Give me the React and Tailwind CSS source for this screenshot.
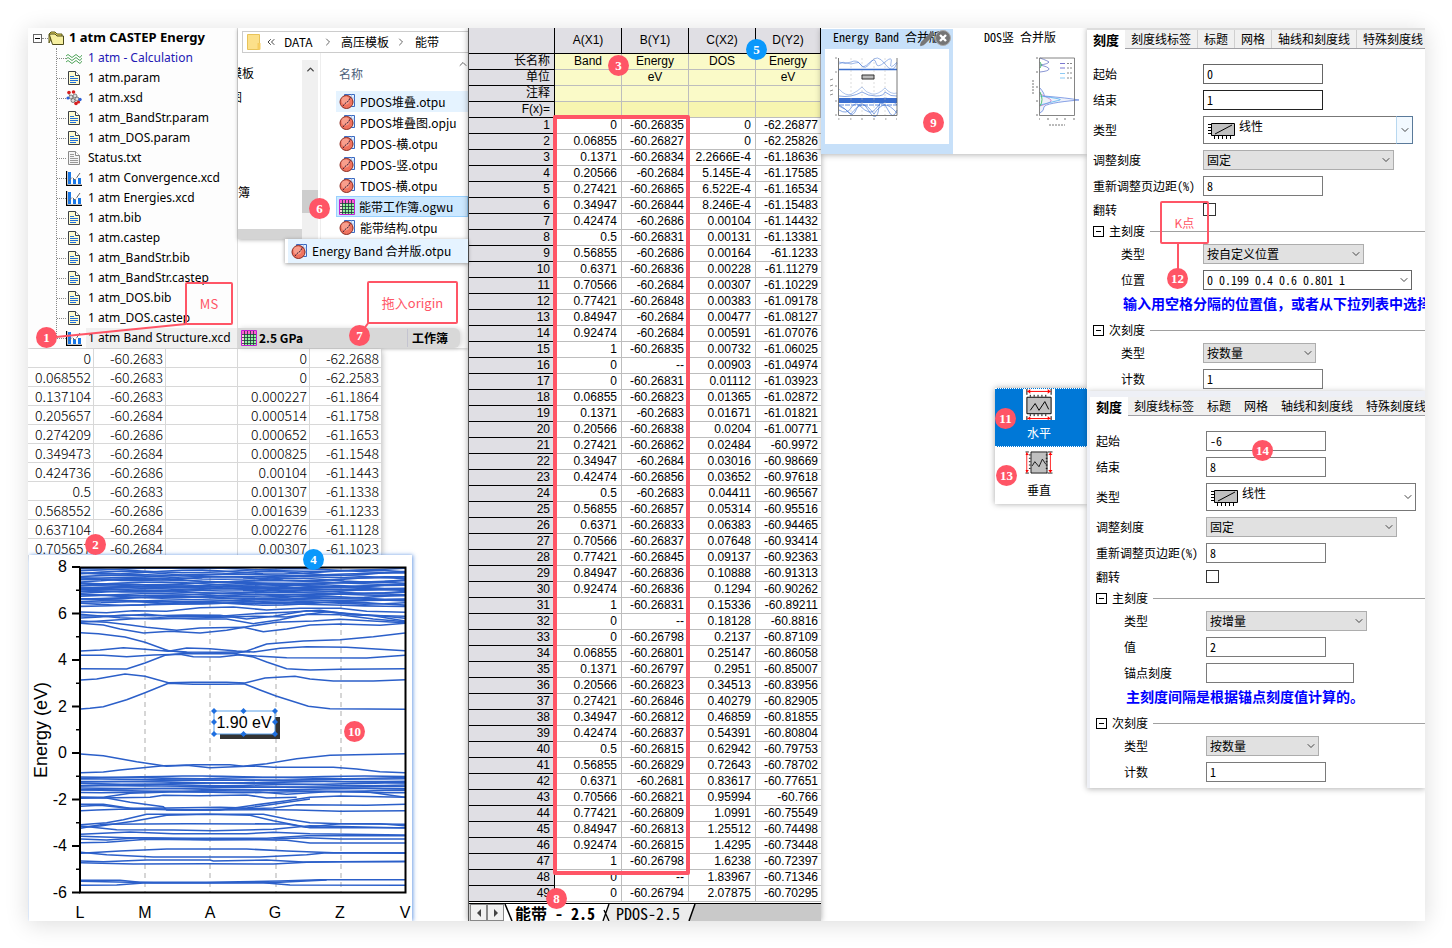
import { ChevronDown, ChevronUp, ChevronRight, ChevronsLeft, Pencil } from "lucide-react";

const TREE = [
  ["wave", "1 atm - Calculation"],
  ["doc", "1 atm.param"],
  ["atoms", "1 atm.xsd"],
  ["doc", "1 atm_BandStr.param"],
  ["doc", "1 atm_DOS.param"],
  ["text", "Status.txt"],
  ["chart", "1 atm Convergence.xcd"],
  ["chart", "1 atm Energies.xcd"],
  ["doc", "1 atm.bib"],
  ["doc", "1 atm.castep"],
  ["doc", "1 atm_BandStr.bib"],
  ["doc", "1 atm_BandStr.castep"],
  ["doc", "1 atm_DOS.bib"],
  ["doc", "1 atm_DOS.castep"],
  ["chart", "1 atm Band Structure.xcd"],
];

const FILES = [
  ["graph", "PDOS堆叠.otpu"],
  ["graph", "PDOS堆叠图.opju"],
  ["graph", "PDOS-横.otpu"],
  ["graph", "PDOS-竖.otpu"],
  ["graph", "TDOS-横.otpu"],
  ["book", "能带工作簿.ogwu"],
  ["graph", "能带结构.otpu"],
];

const RAW = [
  ["0", "-60.2683", "0", "-62.2688"],
  ["0.068552", "-60.2683", "0", "-62.2583"],
  ["0.137104", "-60.2683", "0.000227", "-61.1864"],
  ["0.205657", "-60.2684", "0.000514", "-61.1758"],
  ["0.274209", "-60.2686", "0.000652", "-61.1653"],
  ["0.349473", "-60.2684", "0.000825", "-61.1548"],
  ["0.424736", "-60.2686", "0.00104", "-61.1443"],
  ["0.5", "-60.2683", "0.001307", "-61.1338"],
  ["0.568552", "-60.2686", "0.001639", "-61.1233"],
  ["0.637104", "-60.2684", "0.002276", "-61.1128"],
  ["0.705657", "-60.2684", "0.00307", "-61.1023"],
];

const K = ["0", "0.06855", "0.1371", "0.20566", "0.27421", "0.34947", "0.42474", "0.5", "0.56855", "0.6371", "0.70566", "0.77421", "0.84947", "0.92474", "1", "0"];
const B = "-60.26835 -60.26827 -60.26834 -60.2684 -60.26865 -60.26844 -60.2686 -60.26831 -60.2686 -60.26836 -60.2684 -60.26848 -60.2684 -60.2684 -60.26835 -- -60.26831 -60.26823 -60.2683 -60.26838 -60.26862 -60.2684 -60.26856 -60.2683 -60.26857 -60.26833 -60.26837 -60.26845 -60.26836 -60.26836 -60.26831 -- -60.26798 -60.26801 -60.26797 -60.26823 -60.26846 -60.26812 -60.26837 -60.26815 -60.26829 -60.2681 -60.26821 -60.26809 -60.26813 -60.26815 -60.26798 -- -60.26794".split(" ");
const C = "0 0 2.2666E-4 5.145E-4 6.522E-4 8.246E-4 0.00104 0.00131 0.00164 0.00228 0.00307 0.00383 0.00477 0.00591 0.00732 0.00903 0.01112 0.01365 0.01671 0.0204 0.02484 0.03016 0.03652 0.04411 0.05314 0.06383 0.07648 0.09137 0.10888 0.1294 0.15336 0.18128 0.2137 0.25147 0.2951 0.34513 0.40279 0.46859 0.54391 0.62942 0.72643 0.83617 0.95994 1.0991 1.25512 1.4295 1.6238 1.83967 2.07875".split(" ");
const D = "-62.26877 -62.25826 -61.18636 -61.17585 -61.16534 -61.15483 -61.14432 -61.13381 -61.1233 -61.11279 -61.10229 -61.09178 -61.08127 -61.07076 -61.06025 -61.04974 -61.03923 -61.02872 -61.01821 -61.00771 -60.9972 -60.98669 -60.97618 -60.96567 -60.95516 -60.94465 -60.93414 -60.92363 -60.91313 -60.90262 -60.89211 -60.8816 -60.87109 -60.86058 -60.85007 -60.83956 -60.82905 -60.81855 -60.80804 -60.79753 -60.78702 -60.77651 -60.766 -60.75549 -60.74498 -60.73448 -60.72397 -60.71346 -60.70295".split(" ");

const BANDS = [
  "182,492 210,490 250,485 320,464 375,443 445,415 520,418 620,418 672,416 720,435 768,453 865,484 930,491 1155,493",
  "182,405 230,402 315,387 375,394 445,413 515,412 620,412 675,414 735,399 825,394 870,402 940,408 1060,408 1155,404",
  "182,371 320,372 375,354 435,331 480,326 640,326 700,336 740,351 800,371 870,375 960,373 1155,371",
  "182,263 235,266 315,276 375,292 445,317 520,325 650,325 680,318 740,297 850,288 960,284 1060,275 1155,264",
  "182,318 240,315 310,308 375,313 445,319 500,309 570,311 650,318 700,321 780,310 860,305 980,307 1155,317",
  "182,331 250,331 320,335 400,330 480,328 520,335 600,336 660,329 710,333 800,338 1040,339 1155,331",
  "430,316 500,321 600,322 690,320",
  "182,235 250,240 300,252 370,264 450,259 540,264 620,256 680,245 770,232 880,228 960,223 1155,233",
  "182,228 260,232 330,240 380,247 470,256 540,249 670,247 730,260 800,252 870,240 960,237 1080,241 1155,235",
  "182,232 240,228 330,222 420,218 520,222 620,222 700,236 780,224 860,208 960,209 1060,222 1155,230",
  "182,219 240,216 310,210 400,212 500,210 600,211 680,222 760,214 860,197 960,203 1060,212 1155,228",
  "182,213 300,213 380,208 460,215 600,214 700,206 800,202 900,196 980,206 1080,212 1155,220",
  "182,201 260,203 340,197 440,199 540,188 640,186 740,195 840,190 960,190 1040,199 1155,202",
  "182,208 300,218 400,222 560,218 700,214 800,216 920,200 1000,210 1155,214",
  "182,627 250,632 350,650 440,664 520,659 630,659 670,664 740,656 830,641 930,631 1155,626",
  "182,683 250,681 300,675 430,662 500,661 570,668 700,663 760,667 940,667 1010,672 1080,680 1155,683",
  "182,757 250,757 330,745 450,741 600,741 720,741 800,748 920,740 1040,740 1155,757",
  "182,757 260,759 330,772 430,785 440,795 600,795 690,782 800,767 870,757 960,753 1155,757",
  "182,760 390,757 430,751 540,752 680,750 740,759 830,757",
  "182,778 250,778 330,790 440,789 600,787 680,789 760,778 870,762",
  "182,784 240,781 340,791 500,795 760,789 830,779 1040,781 1155,778",
  "182,797 230,795 320,792 560,795 760,794 830,795 960,799 1155,797",
  "182,839 260,833 310,824 380,808 460,808 730,808 800,822 870,833 960,836 1155,838",
  "182,845 240,843 340,829 440,811 560,808 690,811 760,827 860,847 960,836 1080,836 1155,842",
  "182,850 250,838 500,836 800,837 870,848 1155,848",
  "182,843 290,854 460,855 580,857 760,853 870,842 1155,849",
  "182,868 330,861 460,866 680,866 760,862 870,866 1155,870",
  "182,874 320,878 520,880 740,880 860,872 1155,872",
  "182,882 260,885 360,878 560,884 760,882 860,878 960,882 1155,882",
  "182,893 260,892 380,883 520,884 720,884 800,886 870,894 1155,894",
  "182,925 300,918 440,912 680,912 800,918 940,923 1155,923",
  "182,922 260,929 400,936 720,936 860,929 920,923 1155,925",
  "182,948 250,950 380,945 570,945 580,948 740,945 850,951 1155,949",
  "182,953 340,957 560,956 760,957 860,952 960,950 1155,950",
  "182,1006 300,1006 360,1012 560,1012 780,1008 900,1004 1155,1004",
  "182,1021 290,1020 380,1013 560,1014 730,1013 810,1020 1155,1021",
  "182,1009 400,1013 750,1013 920,1005",
];

function wiggle(y, amp, seed) {
  let s = "";
  for (let i = 0; i <= 16; i++) {
    const x = 182 + (i * 973) / 16;
    const v = y + amp * Math.sin(seed * 2.3 + i * (0.35 + (seed % 5) * 0.13));
    s += `${x.toFixed(0)},${Math.max(70, v).toFixed(1)} `;
  }
  return s;
}
const UPPER = [
  ...Array.from({ length: 15 }, (_, i) => wiggle(73 + i * 4, 6, i + 1)),
  ...Array.from({ length: 17 }, (_, i) => wiggle(122 + i * 3.6, 5, i + 4)),
];
const LOWER = Array.from({ length: 12 }, (_, i) => wiggle(695 + i * 4.2, 2, i + 3));

function Icon({ kind }) {
  if (kind === "doc" || kind === "text") {
    const gray = kind === "text";
    return (
      <svg viewBox="0 0 16 16" className="size-4 shrink-0">
        <path d="M2.500 1.500h7l4 4v9h-11z" fill={gray ? "#f4f4f4" : "#fffbd0"} stroke={gray ? "#8a8a8a" : "#3b4046"} />
        <path d="M9.500 1.500v4h4" fill="#fff" stroke={gray ? "#8a8a8a" : "#3b4046"} />
        <path d={gray ? "M4 4.500h4M4 6.500h4M4 8.500h8M4 10.500h8M4 12.500h8" : "M4 6.500h4M4 8.500h8M4 10.500h8M4 12.500h6"} stroke={gray ? "#999" : "#1f6fd8"} />
      </svg>
    );
  }
  if (kind === "wave")
    return (
      <svg viewBox="0 0 16 16" className="size-4 shrink-0" fill="none" stroke="#4fa45a">
        <path d="M0 6q2-3 4 0t4 0 4 0 4-1M0 9q2-3 4 0t4 0 4 0 4-1M0 12q2-3 4 0t4 0 4 0 4-1" />
      </svg>
    );
  if (kind === "atoms")
    return (
      <svg viewBox="0 0 16 16" className="size-4 shrink-0">
        <path d="M2 3l3 4 4-1 4 3M5 7l2 4 4 2" stroke="#777" fill="none" />
        <g fill="#ddd" stroke="#555" strokeWidth=".7"><circle cx="5" cy="7" r="2" /><circle cx="9" cy="6" r="2" /><circle cx="7" cy="10.500" r="2" /><circle cx="11" cy="9" r="2" /></g>
        <g fill="#d81e1e"><circle cx="3" cy="2.500" r="1.800" /><circle cx="7.500" cy="2" r="1.800" /><circle cx="10" cy="13.500" r="1.800" /><circle cx="12.500" cy="12" r="1.600" /></g>
        <g fill="#2b5fd8"><circle cx="2" cy="8" r="1.600" /><circle cx="14" cy="9.500" r="1.700" /></g>
      </svg>
    );
  if (kind === "chart")
    return (
      <svg viewBox="0 0 16 16" className="size-4 shrink-0">
        <path d="M2 2h3v12H2zM7 9h3v5H7zM12 8h3v6h-3z" fill="#1878e8" />
        <path d="M3 11l3-4 3 3 5-7" fill="none" stroke="#666" />
        <path d="M5 7l2 1M9 9l2-1" stroke="#fff" />
        <path d="M.5 1v14.500H16" fill="none" stroke="#000" strokeWidth="1.400" />
      </svg>
    );
  if (kind === "graph")
    return (
      <svg viewBox="0 0 17 17" className="size-[17px] shrink-0">
        <path d="M5.500 1.500h10v12h-10z" fill="#e3efff" stroke="#3a68c0" />
        <path d="M9 1.500v12M12.500 1.500v12M5.500 5h10M5.500 9h10" stroke="#8fb4ea" strokeWidth=".7" />
        <circle cx="7.500" cy="9" r="6.500" fill="#f0735f" stroke="#8b2b20" />
        <circle cx="6.500" cy="7.500" r="4" fill="#fbb0a0" opacity=".7" />
        <path d="M4 13l2-2.500L9.500 8l2-4" fill="none" stroke="#3a2038" strokeDasharray="2 .8" />
      </svg>
    );
  return (
    <svg viewBox="0 0 16 16" className="size-4 shrink-0">
      <path d="M.5.5h15v15H.5z" fill="#fff" stroke="#c020d0" />
      <path d="M1 1h14v3H1z" fill="#ff5fd0" />
      <path d="M1 4h2v11H1z" fill="#ffd0e0" />
      <path d="M3 4h12v11H3z" fill="#8ff59c" />
      <path d="M3.500 1v14M6.500 1v14M9.500 1v14M12.500 1v14M1 4.500h14M1 7.500h14M1 10.500h14M1 13.500h14" stroke="#20323a" strokeWidth=".8" />
    </svg>
  );
}

function Badge({ n, blue, className }) {
  return (
    <span className={`absolute z-30 flex size-[21px] items-center justify-center rounded-full font-['Liberation_Serif',serif] text-[13px] leading-none font-bold text-white ${blue ? "bg-[#0a98fb]" : "bg-[#ff5566]"} ${className}`}>
      {n}
    </span>
  );
}

function Callout({ children, className }) {
  return (
    <div className={`absolute z-20 flex items-center justify-center rounded-xs border-2 border-[#ff5566] text-[#ff5566] ${className}`}>
      {children}
    </div>
  );
}

function ProjectTree() {
  return (
    <section className="w-[210px] shrink-0 border-r border-[#ddd] bg-[#fdfdfd] font-['Noto_Sans',sans-serif] text-[12px] text-black">
      <div className="flex h-5 items-center pl-[5px]">
        <button aria-label="收起" className="flex size-[9px] items-center justify-center border border-[#666]"><span className="h-px w-[5px] bg-black" /></button>
        <span className="w-[6px] border-t border-dotted border-[#888]" />
        <svg viewBox="0 0 16 15" className="h-[15px] w-4 shrink-0">
          <path d="M1 3l2-2h4l2 2h5v3H4L1 12z" fill="#e8d860" stroke="#5c5a1a" />
          <path d="M1.500 4l3 9.500h11V5H9L7 3H2z" fill="#f6efa0" stroke="#4c4a1a" />
        </svg>
        <h2 className="ml-[5px] text-[13px] font-bold whitespace-nowrap">1 atm CASTEP Energy</h2>
      </div>
      <ul className="relative">
        <li className="absolute top-0 left-7 h-[290px] border-l border-dotted border-[#888]" aria-hidden="true" />
        {TREE.map(([kind, name], i) => (
          <li key={name} className="flex h-5 items-center pl-[29px]">
            <span className="w-[9px] border-t border-dotted border-[#888]" />
            <Icon kind={kind} />
            <span className={`ml-[4px] flex h-5 grow items-center pl-[2px] whitespace-nowrap ${i === 0 ? "text-[#2318b4]" : ""} ${i === 14 ? "bg-[#f0f0f0]" : ""}`}>{name}</span>
          </li>
        ))}
      </ul>
    </section>
  );
}

function Explorer() {
  return (
    <section className="relative flex h-[211px] flex-col overflow-hidden bg-white pt-[3px] text-[12px] text-black shadow-[0_1px_4px_rgba(0,0,0,0.3)]">
      <nav className="ml-1 flex h-[22px] shrink-0 items-center border border-r-0 border-[#ccc] pl-1">
        <svg viewBox="0 0 14 16" className="h-4 w-[14px]"><path d="M.5.500h12v15H.5z" fill="#fce08a" stroke="#e8c35a" /><path d="M10.500 9h3v6.500h-3z" fill="#f6cd60" /></svg>
        <ChevronsLeft className="ml-1 size-3 text-[#444]" strokeWidth={2} />
        <a href="#data" className="ml-[7px] w-[38px]">DATA</a>
        <ChevronRight className="mr-1 size-3 text-[#666]" />
        <a href="#template" className="ml-[3px] w-[52px]">高压模板</a>
        <ChevronRight className="mx-[2px] size-3 text-[#666]" />
        <a href="#band" className="ml-[6px]">能带</a>
      </nav>
      <div className="flex grow">
        <div className="flex w-16 flex-col overflow-hidden">
          <div className="-ml-2 mt-[8px] h-6 leading-6">模板</div>
          <div className="-ml-2 h-6 leading-6">图</div>
          <div className="mt-[71px] h-6 leading-6">簿</div>
          <div className="mt-auto h-[10px] bg-[#d4d4d4]" />
        </div>
        <div className="mt-[7px] flex w-4 flex-col items-center bg-[#f0f0f0]">
          <ChevronUp className="mt-1 size-[11px] text-[#444]" strokeWidth={3} />
          <span className="mt-auto mb-[26px] h-[23px] w-full bg-[#cdcdcd]" />
        </div>
        <div className="ml-[2px] flex grow flex-col border-l border-[#eee]">
          <div className="flex h-[38px] shrink-0 items-center pt-1 pl-[18px] text-[#4c607a]">
            名称<ChevronUp className="-mt-5 mr-[-1px] ml-auto size-3 text-[#666]" />
          </div>
          <ul className="pl-[15px]">
            {FILES.map(([kind, name], i) => (
              <li key={name} className={`flex h-[21px] items-center gap-1 pl-[3px] whitespace-nowrap ${i === 0 ? "bg-[#e5f3ff]" : ""} ${i === 5 ? "bg-[#cce8ff] ring-1 ring-[#99d1ff] ring-inset" : ""}`}>
                <Icon kind={kind} />{name}
              </li>
            ))}
          </ul>
        </div>
      </div>
    </section>
  );
}

function RawTable() {
  return (
    <div className="mt-px h-[206px] w-[354px] overflow-hidden bg-white shadow-[0_2px_6px_rgba(0,0,0,0.3)]">
      <table className="w-full table-fixed border-separate border-spacing-0 text-right text-[14px] leading-[18px] font-light text-black">
        <colgroup><col className="w-[66px]" /><col /><col /><col /><col /></colgroup>
        <tbody>
          {RAW.map((r) => (
            <tr key={r[0]}>
              {[r[0], r[1], "", r[2], r[3]].map((v, i) => (
                <td key={i} className="h-[19px] border-r border-b border-[#d8d8d8] p-0 pr-[2px]">{v}</td>
              ))}
            </tr>
          ))}
        </tbody>
      </table>
    </div>
  );
}

function BandChart() {
  const ty = (v) => 567 + (8 - v) * 23.25;
  return (
    <section className="relative z-10 ml-px h-[366px] w-[383px] bg-white shadow-[1px_0_4px_rgba(70,130,220,0.8)]">
      <svg viewBox="29 555 383 366" className="h-full w-full font-['Liberation_Sans',sans-serif]" role="img" aria-label="能带图">
        <g stroke="#c9c9c9" strokeWidth="1.500" strokeDasharray="5 4">
          {[145, 210, 276, 341].map((x) => <path key={x} d={`M${x} 567V892`} />)}
        </g>
        <g transform="translate(20 545) scale(.33333)" fill="none" stroke="#2b5fc9" strokeWidth="4.600">
          {UPPER.map((p, i) => <polyline key={`u${i}`} points={p} />)}
          {LOWER.map((p, i) => <polyline key={`l${i}`} points={p} />)}
          {BANDS.map((p, i) => <polyline key={i} points={p} />)}
        </g>
        <path d="M80 567.500H405.500V892.500H80z" fill="none" stroke="#000" strokeWidth="2" />
        <g stroke="#000" strokeWidth="2">
          {[8, 6, 4, 2, 0, -2, -4, -6].map((v) => <path key={v} d={`M72 ${ty(v)}H80`} />)}
          {[7, 5, 3, 1, -1, -3, -5].map((v) => <path key={v} d={`M76 ${ty(v)}H80`} strokeWidth="1.500" />)}
        </g>
        <g fontSize="16" textAnchor="end">
          {[8, 6, 4, 2, 0, -2, -4, -6].map((v) => <text key={v} x="67" y={ty(v) + 5}>{v}</text>)}
        </g>
        <g fontSize="16" textAnchor="middle">
          {["L", "M", "A", "G", "Z", "V"].map((t, i) => <text key={t} x={80 + i * 65} y="918">{t}</text>)}
          <text transform="translate(47 730) rotate(-90)" fontSize="18">Energy (eV)</text>
        </g>
        <path d="M220 717h60v22h-60z" fill="#333" />
        <path d="M214 711h61v23h-61z" fill="#fff" stroke="#5aa0e8" />
        <text x="244" y="728" fontSize="16" textAnchor="middle">1.90 eV</text>
        <g fill="#1e6fe0">
          {[[214, 711], [243.5, 711], [275, 711], [214, 722], [275, 722], [214, 734], [243.5, 734], [275, 734]].map(([x, y]) => (
            <path key={`${x}-${y}`} d={`M${x - 3} ${y}l3-3 3 3-3 3z`} />
          ))}
        </g>
      </svg>
      <Badge n="4" blue className="top-[-6px] left-[274px]" />
      <Badge n="10" className="top-[166px] left-[315px]" />
    </section>
  );
}

function Sheet() {
  const meta = [
    ["长名称", "Band", "Energy", "DOS", "Energy"],
    ["单位", "", "eV", "", "eV"],
    ["注释", "", "", "", ""],
    ["F(x)=", "", "", "", ""],
  ];
  const head = "border-r border-b border-black bg-[#e0dfe4] p-0 font-normal";
  return (
    <section className="relative flex w-[353px] shrink-0 flex-col border-l border-[#555] bg-white font-['Liberation_Sans','Noto_Sans_CJK_SC',sans-serif] text-[12px] text-black shadow-[0_0_6px_rgba(0,0,0,0.35)]">
      <table className="w-full table-fixed border-separate border-spacing-0 leading-[15px]">
        <colgroup><col className="w-[86px]" /><col className="w-[67px]" /><col className="w-[67px]" /><col className="w-[67px]" /><col /></colgroup>
        <thead>
          <tr>
            {["", "A(X1)", "B(Y1)", "C(X2)", "D(Y2)"].map((t) => <th key={t} className={`h-[26px] ${head}`}>{t}</th>)}
          </tr>
        </thead>
        <tbody>
          {meta.map((r, n) => (
            <tr key={r[0]}>
              <th className={`h-4 text-right text-[12px] ${head}`}><div className="h-[15px] pr-1">{r[0]}</div></th>
              {r.slice(1).map((v, i) => (
                <td key={i} className={`h-4 border-r border-b border-[#bdbdbd] p-0 text-center ${n === 3 ? "bg-[#f7f5b0]" : "bg-[#fafac8]"}`}>{v}</td>
              ))}
            </tr>
          ))}
          {B.map((b, i) => (
            <tr key={i}>
              <th className={`h-4 text-right ${head}`}><div className="pr-1">{i + 1}</div></th>
              <td className="border-r border-b border-[#bdbdbd] p-0 pr-1 text-right">{K[i % 16]}</td>
              <td className="border-r border-b border-[#bdbdbd] p-0 pr-1 text-right">{b}</td>
              <td className="border-r border-b border-[#bdbdbd] p-0 pr-1 text-right">{C[i]}</td>
              <td className="border-b border-[#bdbdbd] p-0 pr-[3px] text-right">{D[i]}</td>
            </tr>
          ))}
        </tbody>
      </table>
      <div className="mt-auto flex h-[18px] items-stretch border-t border-black bg-[#c9c9c9] pl-px font-['Noto_Sans_Mono_CJK_SC','Noto_Sans_CJK_SC',monospace] text-[16px] leading-4">
        <button aria-label="上一个" className="flex w-[17px] items-center justify-center border border-[#888] bg-[#f0f0f0]"><svg viewBox="0 0 6 8" className="h-2 w-[6px]"><path d="M5 0v8L1 4z" fill="#444" /></svg></button>
        <button aria-label="下一个" className="flex w-[17px] items-center justify-center border border-[#888] bg-[#f0f0f0]"><svg viewBox="0 0 6 8" className="h-2 w-[6px]"><path d="M1 0v8l4-4z" fill="#444" /></svg></button>
        <button className="flex items-center bg-white pr-1 font-bold whitespace-nowrap">
          <svg viewBox="0 0 11 17" className="h-[17px] w-[11px]"><path d="M1 0l7 17" stroke="#000" strokeWidth="1.500" /></svg>能带 - 2.5
        </button>
        <button className="flex items-center bg-[#ececec] whitespace-nowrap">
          <svg viewBox="0 0 17 17" className="h-[17px] w-[17px]"><path d="M0 0h9L3 17H0z" fill="#fff" /><path d="M10 0L4 17M5 6l5 11" stroke="#000" strokeWidth="1.300" fill="none" /></svg>PDOS-2.5
        </button>
        <svg viewBox="0 0 16 17" className="h-[17px] w-4"><path d="M0 0h15L9 17H0z" fill="#ececec" /><path d="M15 0L9 17" stroke="#000" strokeWidth="1.500" /></svg>
      </div>
      <div className="absolute top-[87px] left-[84px] z-10 h-[760px] w-[137px] rounded-xs border-4 border-[#ff5566]" />
      <Badge n="3" className="top-[27px] left-[139px]" />
      <Badge n="5" blue className="top-[11px] left-[277px]" />
      <Badge n="8" className="top-[860px] left-[77px]" />
    </section>
  );
}

function Gallery() {
  return (
    <section className="relative flex h-[126px] bg-white pt-px font-['Noto_Sans_Mono_CJK_SC','Noto_Sans_CJK_SC',monospace] text-[12px] leading-4 whitespace-nowrap text-black shadow-[0_1px_6px_rgba(0,0,0,0.3)]">
      <figure className="w-[132px] bg-[#c7e0f9] px-1">
        <figcaption className="h-5 pl-2">Energy Band 合并版</figcaption>
        <svg viewBox="825 49 124 95" className="h-[95px] w-full bg-white" fill="none" stroke="#3b6fd0">
          <path d="M839 64q4-3 8-1t8 0 6 2 8-2 7 0 9-1 6 1 6-1M839 62q6 3 12 0t10 3 10-3 14 2 12-1" strokeWidth=".5" />
          <path d="M839 69.500h58" strokeWidth="1.400" />
          <path d="M839 89q7 8 13 5t10-7q4 6 10 7t13-6q6 7 12 5" strokeWidth=".4" />
          <path d="M839 96q12 2 23-4 6 4 14 4t9-4q6 5 12 4M839 106q7 3 12 8 6-8 11-9t12 9q6-9 11-9t12 8M839 110q8 5 12-2t9-2 9 6 9-6 10 4 9 0M839 105q6 3 10 8t8-5 12 3 10-4 18-2" strokeWidth=".6" />
          <path d="M839 100.500h58" strokeWidth="5" />
          <path d="M839 105h58" strokeWidth=".8" strokeDasharray="5 1" />
          <path d="M851 58v57M862 58v57M874 58v57M885 58v57" stroke="#bbb" strokeWidth=".5" strokeDasharray="2 2" />
          <path d="M838.500 58v57.500h58.500V58" stroke="#555" strokeWidth=".8" />
          <path d="M862 75h12v4h-12z" fill="#bbb" stroke="#333" />
          <path d="M830 95l3-1M830 91l3-1M830 86l3-1M830 80l3-1M835 58h2M835 72h2M835 86h2M835 101h2M835 115h2M838 119h1.500M850 119h1.500M861 119h2M873 119h2M885 119h1.500M896 119h1" stroke="#777" strokeWidth=".8" />
        </svg>
      </figure>
      <figure className="grow bg-white">
        <figcaption className="h-5 pl-[31px]">DOS竖 合并版</figcaption>
        <svg viewBox="953 49 134 95" className="h-[95px] w-full" fill="none">
          <path d="M1040 58q8 3 9 4-1 2-9 3 9 2 9 4t-9 3" stroke="#6a78c8" strokeWidth=".8" />
          <path d="M1040 88q5 6 4 8 24 2 35 4-34 3-35 7 0 4-4 6" stroke="#6a8ae0" fill="#eef1fa" strokeWidth=".8" />
          <path d="M1040 94q9 4 11 6t-11 6" stroke="#c06ac0" strokeWidth=".7" />
          <path d="M1040 96q24 3 20 4t-20 5" stroke="#3fa9f0" strokeWidth=".7" />
          <path d="M1040 92q4 8 0 14M1040 62q3 3 0 6" stroke="#50c070" />
          <path d="M1039.500 58H1074.500V115.500H1039.500z" stroke="#666" strokeWidth=".8" />
          <path d="M1036 58h2M1036 72h2M1036 87h2M1036 101h2M1036 115h2M1039 119h1M1047 119h2M1056 119h2M1064 119h2M1073 119h2M1049 125h16M1033 80v14" stroke="#777" strokeDasharray="2 1" />
          <path d="M1060 63.500h5M1060 68h5" stroke="#7a78d0" /><path d="M1060 73.500h5M1060 78h5" stroke="#8ccaf5" />
          <path d="M1067 63.500h6M1067 68h5M1067 73h6M1067 78h5" stroke="#888" strokeDasharray="2 1" />
        </svg>
      </figure>
      <button aria-label="编辑" className="absolute top-[3px] left-[98px] text-[#666]"><Pencil className="size-4" fill="#777" strokeWidth={1} /></button>
      <button aria-label="关闭" className="absolute top-[2px] left-[114px]">
        <svg viewBox="0 0 16 16" className="size-4"><circle cx="8" cy="8" r="7.500" fill="#757575" stroke="#aaa" /><path d="M5 5l6 6M11 5l-6 6" stroke="#fff" strokeWidth="2.400" /></svg>
      </button>
      <Badge n="9" className="top-[84px] left-[102px]" />
    </section>
  );
}

function AxisIcon({ vertical }) {
  return (
    <svg viewBox="0 0 32 32" className="mr-1 size-8 bg-white" fill="none">
      <g transform={vertical ? "rotate(90 16 16)" : undefined}>
        <path d={vertical ? "M3.500 6.500h25v19h-25z" : "M3.500 8.500h25v17h-25z"} fill="#c0c0c0" stroke="#000" />
        <path d="M7 8V6M11 8V6M15 8V6M19 8V6M23 8V6M7 26v2M11 26v2M15 26v2M19 26v2M23 26v2" stroke="#000" />
        <path d="M3.500 0v6M28.500 0v6M3.500 28v4M28.500 28v4" stroke="#000" />
        <path d="M4 2.500h24M4 30.500h24" stroke="#f00" />
        <path d="M4 2.500l3-2.500v5zM28 2.500l-3-2.500v5zM4 30.500l3-2.500v4zM28 30.500l-3-2.500v4z" fill="#f00" />
      </g>
      <path d={vertical ? "M8 20l3-5 5 6 4-9 4 6" : "M7 22l5-7 4 7 6-9 4 8"} stroke="#000" />
    </svg>
  );
}

function AxisPicker() {
  return (
    <section className="relative ml-auto w-[92px] bg-white font-['Noto_Sans_CJK_SC',sans-serif] text-[12px] shadow-[0_0_6px_rgba(0,0,0,0.35)]">
      <button className="flex h-[59px] w-full flex-col items-center border-y border-dotted border-white bg-[#0078d7] leading-[26px] text-white"><AxisIcon /><span className="mr-1">水平</span></button>
      <button className="flex h-[57px] w-full flex-col items-center pt-[2px] leading-[28px] text-black"><AxisIcon vertical /><span className="mr-1">垂直</span></button>
      <Badge n="11" className="top-[20px] left-0" />
      <Badge n="13" className="top-[77px] left-[1px]" />
    </section>
  );
}

function Row({ id, label, indent, tall, children }) {
  return (
    <div className={`flex items-center ${tall ? "h-[34px]" : "h-[26px]"}`}>
      <label htmlFor={id} className={`w-[110px] shrink-0 whitespace-nowrap ${indent ? "pl-7" : ""}`}>{label}</label>
      {children}
    </div>
  );
}

function Text({ id, value, className }) {
  return <input id={id} type="text" defaultValue={value} className={`h-5 border bg-white px-[3px] pb-px outline-none ${className}`} />;
}

function Select({ id, value, className }) {
  return (
    <span className={`relative h-5 ${className}`}>
      <select id={id} className="block h-full w-full appearance-none border border-[#adadad] bg-[#e1e1e1] px-[3px] leading-[18px]"><option>{value}</option></select>
      <ChevronDown className="pointer-events-none absolute top-1 right-[2px] size-3 text-[#444]" />
    </span>
  );
}

function TypeSelect({ id, active }) {
  return (
    <span className="relative h-7 w-[210px]">
      <select id={id} className="block h-full w-full appearance-none border border-[#777] bg-white pb-[9px] pl-[35px] leading-[16px]"><option>线性</option></select>
      <svg viewBox="0 0 28 17" className="pointer-events-none absolute top-[6px] left-[4px] h-[17px] w-7">
        <path d="M4.500 1.500h23v12h-23z" fill="#c0c0c0" stroke="#000" />
        <path d="M1 2.500h3M1 5.500h3M1 8.500h3M1 11.500h3M7.500 14v3M11.500 14v3M15.500 14v3M19.500 14v3M23.500 14v3" stroke="#000" />
        <path d="M8 12L25 3" stroke="#000" />
      </svg>
      <span className={`pointer-events-none absolute inset-y-0 right-0 flex w-[17px] items-center justify-center ${active ? "border border-[#5a7a9a] border-l-[#b8d8f0] bg-[#f2f9ff]" : ""}`}><ChevronDown className="size-3 text-[#444]" /></span>
    </span>
  );
}

function GroupTitle({ children }) {
  return (
    <div className="flex h-[21px] items-center gap-[5px] pt-px">
      <button aria-label={`收起${children}`} className="flex size-[11px] items-center justify-center border border-black"><span className="h-px w-[5px] bg-black" /></button>
      <h3>{children}</h3>
      <span className="h-px grow bg-[#a0a0a0]" />
    </div>
  );
}

function TabBar({ divided }) {
  const line = divided ? "border-[#d0d0d0]" : "border-transparent";
  return (
    <div role="tablist" className="flex h-[19px] overflow-hidden bg-[#f0f0f0] whitespace-nowrap">
      <button role="tab" aria-selected="true" className="w-[38px] shrink-0 bg-white text-center text-[13px] font-bold">刻度</button>
      <div className="flex grow border-b border-[#a0a0a5]">
        {["刻度线标签", "标题", "网格", "轴线和刻度线", "特殊刻度线"].map((t) => (
          <button role="tab" aria-selected="false" key={t} className={`shrink-0 border-r px-[6px] leading-4 ${line}`}>{t}</button>
        ))}
      </div>
    </div>
  );
}

const FORM = "font-['Noto_Sans_Mono_CJK_SC','Noto_Sans_CJK_SC',monospace] text-[12px] text-black bg-white";

function ScaleX() {
  return (
    <section className={`relative h-[363px] border-t-2 border-[#ddd] shadow-[0_0_6px_rgba(0,0,0,0.3)] ${FORM}`}>
      <TabBar divided />
      <form className="pt-3 pl-[6px]">
        <Row id="x-from" label="起始"><Text id="x-from" value="0" className="w-30 border-[#666]" /></Row>
        <Row id="x-to" label="结束"><Text id="x-to" value="1" className="w-30 border-[#222]" /></Row>
        <Row id="x-type" label="类型" tall><TypeSelect id="x-type" active /></Row>
        <Row id="x-rescale" label="调整刻度"><Select id="x-rescale" value="固定" className="w-[191px]" /></Row>
        <Row id="x-margin" label="重新调整页边距(%)"><Text id="x-margin" value="8" className="w-30 border-[#7a7a7a]" /></Row>
        <div className="flex h-[21px] items-center"><label htmlFor="x-rev" className="w-[110px]">翻转</label><input id="x-rev" type="checkbox" className="size-[13px] appearance-none border border-[#333] bg-white" /></div>
        <GroupTitle>主刻度</GroupTitle>
        <Row id="x-major" label="类型" indent><Select id="x-major" value="按自定义位置" className="w-[161px]" /></Row>
        <Row id="x-pos" label="位置" indent>
          <span className="relative flex h-5 w-[209px]">
            <Text id="x-pos" value="0 0.199 0.4 0.6 0.801 1" className="w-full border-[#666]" />
            <button type="button" aria-label="展开位置列表" className="absolute top-1 right-[2px]"><ChevronDown className="size-3 text-[#444]" /></button>
          </span>
        </Row>
        <p className="mb-[6px] h-5 overflow-hidden pl-[30px] text-[14px] leading-5 font-bold whitespace-nowrap text-[#0000ff]">输入用空格分隔的位置值，或者从下拉列表中选择</p>
        <GroupTitle>次刻度</GroupTitle>
        <Row id="x-minor" label="类型" indent><Select id="x-minor" value="按数量" className="w-[113px]" /></Row>
        <Row id="x-count" label="计数" indent><Text id="x-count" value="1" className="w-30 border-[#7a7a7a]" /></Row>
      </form>
      <Callout className="top-[171px] left-[73px] h-[43px] w-[49px] font-['Noto_Sans_CJK_SC',sans-serif] text-[12px]">K点</Callout>
      <span className="absolute top-[214px] left-[90px] z-20 h-7 w-[2px] bg-[#ff5566]" />
      <Badge n="12" className="top-[238px] left-[80px]" />
    </section>
  );
}

function ScaleY() {
  return (
    <section className={`relative h-[397px] border-t-[6px] border-l-[3px] border-[#eef0f6] shadow-[0_1px_6px_rgba(0,0,0,0.3)] ${FORM}`}>
      <TabBar />
      <form className="pt-3 pl-[6px]">
        <Row id="y-from" label="起始"><Text id="y-from" value="-6" className="w-30 border-[#7a7a7a]" /></Row>
        <Row id="y-to" label="结束"><Text id="y-to" value="8" className="w-30 border-[#7a7a7a]" /></Row>
        <Row id="y-type" label="类型" tall><TypeSelect id="y-type" /></Row>
        <Row id="y-rescale" label="调整刻度"><Select id="y-rescale" value="固定" className="w-[191px]" /></Row>
        <Row id="y-margin" label="重新调整页边距(%)"><Text id="y-margin" value="8" className="w-30 border-[#7a7a7a]" /></Row>
        <div className="flex h-[21px] items-center"><label htmlFor="y-rev" className="w-[110px]">翻转</label><input id="y-rev" type="checkbox" className="size-[13px] appearance-none border border-[#333] bg-white" /></div>
        <GroupTitle>主刻度</GroupTitle>
        <Row id="y-major" label="类型" indent><Select id="y-major" value="按增量" className="w-[161px]" /></Row>
        <Row id="y-step" label="值" indent><Text id="y-step" value="2" className="w-30 border-[#7a7a7a]" /></Row>
        <Row id="y-anchor" label="锚点刻度" indent><Text id="y-anchor" value="" className="w-37 border-[#7a7a7a]" /></Row>
        <p className="mb-[6px] h-5 overflow-hidden pl-[30px] text-[14px] leading-5 font-bold whitespace-nowrap text-[#0000ff]">主刻度间隔是根据锚点刻度值计算的。</p>
        <GroupTitle>次刻度</GroupTitle>
        <Row id="y-minor" label="类型" indent><Select id="y-minor" value="按数量" className="w-[113px]" /></Row>
        <Row id="y-count" label="计数" indent><Text id="y-count" value="1" className="w-30 border-[#7a7a7a]" /></Row>
      </form>
      <Badge n="14" className="top-[43px] left-[162px]" />
    </section>
  );
}

export default function App() {
  return (
    <main className="m-7 mr-[27px] flex overflow-clip bg-white font-['Noto_Sans_CJK_SC',sans-serif] shadow-[0_3px_22px_rgba(0,0,0,0.14)]">
      <div className="relative w-[440px] shrink-0">
        <div className="flex h-80 shadow-[0_1px_3px_rgba(0,0,0,0.2)]">
          <ProjectTree />
          <div className="flex grow flex-col">
            <Explorer />
            <div className="z-10 ml-auto flex h-6 w-[183px] items-center gap-1 border-l-[3px] border-white bg-[#e5f3ff] pl-[3px] text-[12px] whitespace-nowrap text-black shadow-[0_1px_4px_rgba(0,0,0,0.4)]">
              <Icon kind="graph" />Energy Band 合并版.otpu
            </div>
            <div className="mt-auto mr-2 flex h-5 items-center rounded-r-md bg-[#d8d8d8] pl-[3px] text-[12px] font-bold text-black shadow-[2px_0_5px_rgba(0,0,0,0.15)]">
              <Icon kind="book" />
              <span className="ml-[2px] grow">2.5 GPa</span>
              <span className="w-[53px] border-l border-[#c4c4d0] pl-1">工作簿</span>
            </div>
          </div>
        </div>
        <RawTable />
        <BandChart />
        <svg viewBox="0 0 440 320" className="pointer-events-none absolute top-0 left-0 z-20 h-80 w-full" stroke="#ff5566" strokeWidth="2">
          <path d="M18 310L158 296M332 306L341 294" />
        </svg>
        <Callout className="top-[254px] left-[157px] h-[43px] w-12 text-[13px]">MS</Callout>
        <Callout className="top-[253px] left-[339px] h-[43px] w-[91px] text-[13px]">拖入origin</Callout>
        <Badge n="1" className="top-[299px] left-[8px]" />
        <Badge n="2" className="top-[506px] left-[57px]" />
        <Badge n="6" className="top-[170px] left-[281px]" />
        <Badge n="7" className="top-[297px] left-[321px]" />
      </div>
      <Sheet />
      <div className="flex w-[266px] shrink-0 flex-col gap-[234px]">
        <Gallery />
        <AxisPicker />
      </div>
      <div className="min-w-0 grow">
        <ScaleX />
        <ScaleY />
      </div>
    </main>
  );
}
